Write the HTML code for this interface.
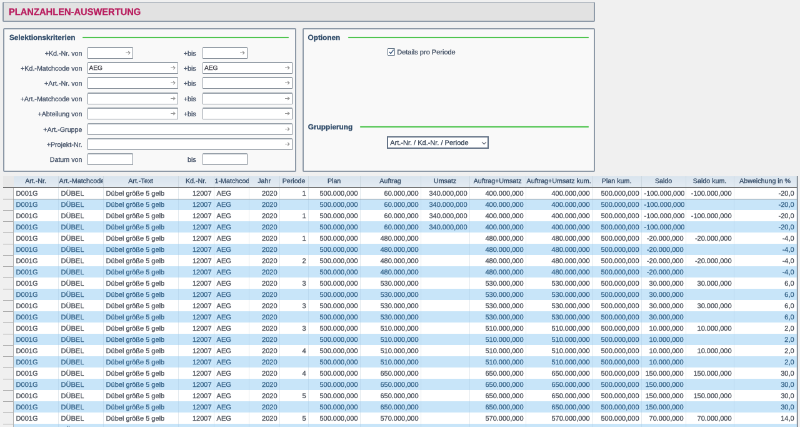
<!DOCTYPE html>
<html><head><meta charset="utf-8">
<style>
html,body{margin:0;padding:0;width:800px;height:427px;overflow:hidden;background:#f0f0f0;}
#wrap{text-rendering:geometricPrecision;-webkit-font-smoothing:antialiased;will-change:transform;-webkit-text-stroke:0.3px currentColor;position:absolute;left:0;top:0;width:1280px;height:684px;transform:scale(0.625);transform-origin:0 0;font-family:"Liberation Sans",sans-serif;}
.title{position:absolute;left:4px;top:3.3px;width:948px;height:31.6px;background:#e2e2e2;border:1.6px solid #8e9aa8;border-left-width:2.4px;border-right-width:2.4px;border-bottom-width:2.6px;border-radius:2px;box-sizing:border-box;}
.title span{position:absolute;left:7.6px;top:5.8px;font-size:15.3px;line-height:20px;font-weight:bold;color:#b91d5e;transform:scaleX(0.96);transform-origin:0 0;white-space:nowrap;}
.panel{position:absolute;top:45.4px;height:229.6px;background:#f9f9f9;border:2px solid #8d99a7;border-radius:2px;box-sizing:border-box;}
.ph{position:absolute;font-size:11.8px;font-weight:bold;color:#2e4a68;}
.gl{position:absolute;height:2.4px;background:#4fc44f;border-radius:1px;box-shadow:0 0 1.2px #a0e4a0;}
.lab{position:absolute;right:calc(1280px - 131.4px);font-size:10.7px;color:#435066;height:19px;line-height:22px;white-space:nowrap;}
.bis{position:absolute;right:calc(1280px - 313.6px);font-size:10.7px;color:#435066;height:19px;line-height:22px;}
.inp{position:absolute;height:19px;background:#fff;border:1.6px solid #848d97;border-top:2.6px solid #98a1aa;border-radius:1.6px;box-sizing:border-box;}
.inp .v{position:absolute;left:2px;top:0;font-size:10.2px;line-height:17px;color:#3c3c44;}
.arr{position:absolute;right:3px;top:4px;}
.tbl{position:absolute;left:4.8px;top:282px;width:1271.2px;height:402px;overflow:hidden;}
.rscol{position:absolute;left:0;top:0;width:16.8px;height:402px;background:#f0f0f0;border-right:1.5px solid #b0b0b0;box-sizing:border-box;}
.hdr{position:absolute;left:0;top:0;width:100%;height:17px;background:linear-gradient(#d9e4ee,#e4ecf3);}
.hsel{position:absolute;left:0;top:0;width:16.8px;height:17px;background:#e8e8e8;}
.hline{position:absolute;left:0;top:17px;width:100%;height:1.5px;background:#7a7a7a;}
.row{position:absolute;left:16.8px;right:0;height:18px;}
.row.w{background:#fff;}
.row.b{background:#c8e5f9;}
.c{position:absolute;top:0;height:18px;line-height:20px;font-size:11px;white-space:nowrap;overflow:hidden;box-sizing:border-box;padding:0 4px;border-right:1px solid #e4eaee;}
.row .c{margin-left:-16.8px;}
.c.l{text-align:left;}
.c.r{text-align:right;padding-right:3px;}
.row.w .c{color:#4a505a;}
.row.b .c{color:#38658a;border-right-color:#bcdaf0;}
.rs{position:absolute;left:0;width:16px;height:18.7px;border-bottom:1.4px solid #a4a4a4;box-sizing:border-box;}
.hdr .c{text-align:center;color:#344b66;border-right:1.2px solid #cdd8e1;line-height:17px;height:17px;padding:0 1px;font-size:10.7px;}
.focus{position:absolute;left:0;top:17px;width:100%;height:20px;border-top:1.6px solid #747474;border-bottom:1.3px solid #8a8a8a;border-right:1.3px solid #8a8a8a;box-sizing:border-box;}
</style></head><body><div id="wrap">
<div class="title"><span>PLANZAHLEN-AUSWERTUNG</span></div>
<div class="panel" style="left:5.3px;width:468.4px;"></div>
<div class="panel" style="left:483.8px;width:468.6px;"></div>
<div class="ph" style="left:14.9px;top:52.6px;">Selektionskriterien</div>
<div class="gl" style="left:132px;top:58.8px;width:330px;"></div>
<div class="ph" style="left:492.5px;top:52.6px;">Optionen</div>
<div class="gl" style="left:556.6px;top:58.8px;width:385px;"></div>
<div class="ph" style="left:492.8px;top:196.2px;">Gruppierung</div>
<div class="gl" style="left:576px;top:201.5px;width:365.6px;"></div>
<div class="lab" style="top:74.5px">+Kd.-Nr. von</div><div class="inp" style="left:139.5px;top:74.5px;width:73px"><span class="v"></span><svg class="arr" width="9" height="7" viewBox="0 0 9 7"><path d="M1 3.5 H8 M5.2 1 L8 3.5 L5.2 6" stroke="#959595" stroke-width="1.1" fill="none"/></svg></div><div class="bis" style="top:74.5px">+bis</div><div class="inp" style="left:324px;top:74.5px;width:72px"><span class="v"></span><svg class="arr" width="9" height="7" viewBox="0 0 9 7"><path d="M1 3.5 H8 M5.2 1 L8 3.5 L5.2 6" stroke="#959595" stroke-width="1.1" fill="none"/></svg></div><div class="lab" style="top:98.9px">+Kd.-Matchcode von</div><div class="inp" style="left:139.5px;top:98.9px;width:145px"><span class="v">AEG</span><svg class="arr" width="9" height="7" viewBox="0 0 9 7"><path d="M1 3.5 H8 M5.2 1 L8 3.5 L5.2 6" stroke="#959595" stroke-width="1.1" fill="none"/></svg></div><div class="bis" style="top:98.9px">+bis</div><div class="inp" style="left:324px;top:98.9px;width:144px"><span class="v">AEG</span><svg class="arr" width="9" height="7" viewBox="0 0 9 7"><path d="M1 3.5 H8 M5.2 1 L8 3.5 L5.2 6" stroke="#959595" stroke-width="1.1" fill="none"/></svg></div><div class="lab" style="top:123.3px">+Art.-Nr. von</div><div class="inp" style="left:139.5px;top:123.3px;width:145px"><span class="v"></span><svg class="arr" width="9" height="7" viewBox="0 0 9 7"><path d="M1 3.5 H8 M5.2 1 L8 3.5 L5.2 6" stroke="#959595" stroke-width="1.1" fill="none"/></svg></div><div class="bis" style="top:123.3px">+bis</div><div class="inp" style="left:324px;top:123.3px;width:144px"><span class="v"></span><svg class="arr" width="9" height="7" viewBox="0 0 9 7"><path d="M1 3.5 H8 M5.2 1 L8 3.5 L5.2 6" stroke="#959595" stroke-width="1.1" fill="none"/></svg></div><div class="lab" style="top:147.7px">+Art.-Matchcode von</div><div class="inp" style="left:139.5px;top:147.7px;width:145px"><span class="v"></span><svg class="arr" width="9" height="7" viewBox="0 0 9 7"><path d="M1 3.5 H8 M5.2 1 L8 3.5 L5.2 6" stroke="#959595" stroke-width="1.1" fill="none"/></svg></div><div class="bis" style="top:147.7px">+bis</div><div class="inp" style="left:324px;top:147.7px;width:144px"><span class="v"></span><svg class="arr" width="9" height="7" viewBox="0 0 9 7"><path d="M1 3.5 H8 M5.2 1 L8 3.5 L5.2 6" stroke="#959595" stroke-width="1.1" fill="none"/></svg></div><div class="lab" style="top:172.1px">+Abteilung von</div><div class="inp" style="left:139.5px;top:172.1px;width:145px"><span class="v"></span><svg class="arr" width="9" height="7" viewBox="0 0 9 7"><path d="M1 3.5 H8 M5.2 1 L8 3.5 L5.2 6" stroke="#959595" stroke-width="1.1" fill="none"/></svg></div><div class="bis" style="top:172.1px">+bis</div><div class="inp" style="left:324px;top:172.1px;width:144px"><span class="v"></span><svg class="arr" width="9" height="7" viewBox="0 0 9 7"><path d="M1 3.5 H8 M5.2 1 L8 3.5 L5.2 6" stroke="#959595" stroke-width="1.1" fill="none"/></svg></div><div class="lab" style="top:196.5px">+Art.-Gruppe</div><div class="inp" style="left:139.5px;top:196.5px;width:328.5px"><span class="v"></span><svg class="arr" width="9" height="7" viewBox="0 0 9 7"><path d="M1 3.5 H8 M5.2 1 L8 3.5 L5.2 6" stroke="#959595" stroke-width="1.1" fill="none"/></svg></div><div class="lab" style="top:220.9px">+Projekt-Nr.</div><div class="inp" style="left:139.5px;top:220.9px;width:328.5px"><span class="v"></span><svg class="arr" width="9" height="7" viewBox="0 0 9 7"><path d="M1 3.5 H8 M5.2 1 L8 3.5 L5.2 6" stroke="#959595" stroke-width="1.1" fill="none"/></svg></div><div class="lab" style="top:245.3px">Datum von</div><div class="inp" style="left:139.5px;top:245.3px;width:73px"><span class="v"></span></div><div class="bis" style="top:245.3px">bis</div><div class="inp" style="left:324px;top:245.3px;width:72px"><span class="v"></span></div>
<div class="cb" style="position:absolute;left:619.6px;top:76.8px;width:10px;height:10px;border:1.5px solid #5d6f82;background:#fff;border-radius:1px;"><svg width="10" height="10" viewBox="0 0 10 10" style="position:absolute;left:0;top:0"><path d="M1.8 5 L4.2 7.6 L8.6 1.6" stroke="#2e4f78" stroke-width="1.4" fill="none"/></svg></div>
<div style="position:absolute;left:635.2px;top:74.8px;font-size:11px;line-height:19px;color:#3c4a5e;">Details pro Periode</div>
<div style="position:absolute;left:619.2px;top:218px;width:159px;height:16px;border:2px solid #637286;background:#fff;">
<span style="position:absolute;left:3px;top:0;font-size:11px;line-height:18px;color:#394658;">Art.-Nr. / Kd.-Nr. / Periode</span>
<svg width="9" height="6" viewBox="0 0 9 6" style="position:absolute;right:1.5px;top:5.5px"><path d="M1 1.2 L4.5 4.7 L8 1.2" stroke="#5a6070" stroke-width="1.1" fill="none"/></svg>
</div>
<div class="tbl">
<div class="rscol"></div>
<div class="hdr"><div class="c l" style="left:16.8px;width:72px">Art.-Nr.</div><div class="c l" style="left:88.8px;width:72px">Art.-Matchcode</div><div class="c l" style="left:160.8px;width:120px">Art.-Text</div><div class="c r" style="left:280.8px;width:57px">Kd.-Nr.</div><div class="c l" style="left:337.8px;width:56px">1-Matchcode</div><div class="c r" style="left:393.8px;width:49px">Jahr</div><div class="c r" style="left:442.8px;width:46px">Periode</div><div class="c r" style="left:488.8px;width:83px">Plan</div><div class="c r" style="left:571.8px;width:97px">Auftrag</div><div class="c r" style="left:668.8px;width:78px">Umsatz</div><div class="c r" style="left:746.8px;width:90px">Auftrag+Umsatz</div><div class="c r" style="left:836.8px;width:106px">Auftrag+Umsatz kum.</div><div class="c r" style="left:942.8px;width:79px">Plan kum.</div><div class="c r" style="left:1021.8px;width:71px">Saldo</div><div class="c r" style="left:1092.8px;width:77px">Saldo kum.</div><div class="c r" style="left:1169.8px;width:100px">Abweichung in %</div><div class="hsel"></div></div>
<div class="row w" style="top:18px"><div class="c l" style="left:16.8px;width:72px">D001G</div><div class="c l" style="left:88.8px;width:72px">DÜBEL</div><div class="c l" style="left:160.8px;width:120px">Dübel größe 5 gelb</div><div class="c r" style="left:280.8px;width:57px">12007</div><div class="c l" style="left:337.8px;width:56px">AEG</div><div class="c r" style="left:393.8px;width:49px">2020</div><div class="c r" style="left:442.8px;width:46px">1</div><div class="c r" style="left:488.8px;width:83px">500.000,000</div><div class="c r" style="left:571.8px;width:97px">60.000,000</div><div class="c r" style="left:668.8px;width:78px">340.000,000</div><div class="c r" style="left:746.8px;width:90px">400.000,000</div><div class="c r" style="left:836.8px;width:106px">400.000,000</div><div class="c r" style="left:942.8px;width:79px">500.000,000</div><div class="c r" style="left:1021.8px;width:71px">-100.000,000</div><div class="c r" style="left:1092.8px;width:77px">-100.000,000</div><div class="c r" style="left:1169.8px;width:100px">-20,0</div></div><div class="rs" style="top:18px"></div><div class="row b" style="top:36px"><div class="c l" style="left:16.8px;width:72px">D001G</div><div class="c l" style="left:88.8px;width:72px">DÜBEL</div><div class="c l" style="left:160.8px;width:120px">Dübel größe 5 gelb</div><div class="c r" style="left:280.8px;width:57px">12007</div><div class="c l" style="left:337.8px;width:56px">AEG</div><div class="c r" style="left:393.8px;width:49px">2020</div><div class="c r" style="left:442.8px;width:46px"></div><div class="c r" style="left:488.8px;width:83px">500.000,000</div><div class="c r" style="left:571.8px;width:97px">60.000,000</div><div class="c r" style="left:668.8px;width:78px">340.000,000</div><div class="c r" style="left:746.8px;width:90px">400.000,000</div><div class="c r" style="left:836.8px;width:106px">400.000,000</div><div class="c r" style="left:942.8px;width:79px">500.000,000</div><div class="c r" style="left:1021.8px;width:71px">-100.000,000</div><div class="c r" style="left:1092.8px;width:77px"></div><div class="c r" style="left:1169.8px;width:100px">-20,0</div></div><div class="rs" style="top:36px"></div><div class="row w" style="top:54px"><div class="c l" style="left:16.8px;width:72px">D001G</div><div class="c l" style="left:88.8px;width:72px">DÜBEL</div><div class="c l" style="left:160.8px;width:120px">Dübel größe 5 gelb</div><div class="c r" style="left:280.8px;width:57px">12007</div><div class="c l" style="left:337.8px;width:56px">AEG</div><div class="c r" style="left:393.8px;width:49px">2020</div><div class="c r" style="left:442.8px;width:46px">1</div><div class="c r" style="left:488.8px;width:83px">500.000,000</div><div class="c r" style="left:571.8px;width:97px">60.000,000</div><div class="c r" style="left:668.8px;width:78px">340.000,000</div><div class="c r" style="left:746.8px;width:90px">400.000,000</div><div class="c r" style="left:836.8px;width:106px">400.000,000</div><div class="c r" style="left:942.8px;width:79px">500.000,000</div><div class="c r" style="left:1021.8px;width:71px">-100.000,000</div><div class="c r" style="left:1092.8px;width:77px">-100.000,000</div><div class="c r" style="left:1169.8px;width:100px">-20,0</div></div><div class="rs" style="top:54px"></div><div class="row b" style="top:72px"><div class="c l" style="left:16.8px;width:72px">D001G</div><div class="c l" style="left:88.8px;width:72px">DÜBEL</div><div class="c l" style="left:160.8px;width:120px">Dübel größe 5 gelb</div><div class="c r" style="left:280.8px;width:57px">12007</div><div class="c l" style="left:337.8px;width:56px">AEG</div><div class="c r" style="left:393.8px;width:49px">2020</div><div class="c r" style="left:442.8px;width:46px"></div><div class="c r" style="left:488.8px;width:83px">500.000,000</div><div class="c r" style="left:571.8px;width:97px">60.000,000</div><div class="c r" style="left:668.8px;width:78px">340.000,000</div><div class="c r" style="left:746.8px;width:90px">400.000,000</div><div class="c r" style="left:836.8px;width:106px">400.000,000</div><div class="c r" style="left:942.8px;width:79px">500.000,000</div><div class="c r" style="left:1021.8px;width:71px">-100.000,000</div><div class="c r" style="left:1092.8px;width:77px"></div><div class="c r" style="left:1169.8px;width:100px">-20,0</div></div><div class="rs" style="top:72px"></div><div class="row w" style="top:90px"><div class="c l" style="left:16.8px;width:72px">D001G</div><div class="c l" style="left:88.8px;width:72px">DÜBEL</div><div class="c l" style="left:160.8px;width:120px">Dübel größe 5 gelb</div><div class="c r" style="left:280.8px;width:57px">12007</div><div class="c l" style="left:337.8px;width:56px">AEG</div><div class="c r" style="left:393.8px;width:49px">2020</div><div class="c r" style="left:442.8px;width:46px">1</div><div class="c r" style="left:488.8px;width:83px">500.000,000</div><div class="c r" style="left:571.8px;width:97px">480.000,000</div><div class="c r" style="left:668.8px;width:78px"></div><div class="c r" style="left:746.8px;width:90px">480.000,000</div><div class="c r" style="left:836.8px;width:106px">480.000,000</div><div class="c r" style="left:942.8px;width:79px">500.000,000</div><div class="c r" style="left:1021.8px;width:71px">-20.000,000</div><div class="c r" style="left:1092.8px;width:77px">-20.000,000</div><div class="c r" style="left:1169.8px;width:100px">-4,0</div></div><div class="rs" style="top:90px"></div><div class="row b" style="top:108px"><div class="c l" style="left:16.8px;width:72px">D001G</div><div class="c l" style="left:88.8px;width:72px">DÜBEL</div><div class="c l" style="left:160.8px;width:120px">Dübel größe 5 gelb</div><div class="c r" style="left:280.8px;width:57px">12007</div><div class="c l" style="left:337.8px;width:56px">AEG</div><div class="c r" style="left:393.8px;width:49px">2020</div><div class="c r" style="left:442.8px;width:46px"></div><div class="c r" style="left:488.8px;width:83px">500.000,000</div><div class="c r" style="left:571.8px;width:97px">480.000,000</div><div class="c r" style="left:668.8px;width:78px"></div><div class="c r" style="left:746.8px;width:90px">480.000,000</div><div class="c r" style="left:836.8px;width:106px">480.000,000</div><div class="c r" style="left:942.8px;width:79px">500.000,000</div><div class="c r" style="left:1021.8px;width:71px">-20.000,000</div><div class="c r" style="left:1092.8px;width:77px"></div><div class="c r" style="left:1169.8px;width:100px">-4,0</div></div><div class="rs" style="top:108px"></div><div class="row w" style="top:126px"><div class="c l" style="left:16.8px;width:72px">D001G</div><div class="c l" style="left:88.8px;width:72px">DÜBEL</div><div class="c l" style="left:160.8px;width:120px">Dübel größe 5 gelb</div><div class="c r" style="left:280.8px;width:57px">12007</div><div class="c l" style="left:337.8px;width:56px">AEG</div><div class="c r" style="left:393.8px;width:49px">2020</div><div class="c r" style="left:442.8px;width:46px">2</div><div class="c r" style="left:488.8px;width:83px">500.000,000</div><div class="c r" style="left:571.8px;width:97px">480.000,000</div><div class="c r" style="left:668.8px;width:78px"></div><div class="c r" style="left:746.8px;width:90px">480.000,000</div><div class="c r" style="left:836.8px;width:106px">480.000,000</div><div class="c r" style="left:942.8px;width:79px">500.000,000</div><div class="c r" style="left:1021.8px;width:71px">-20.000,000</div><div class="c r" style="left:1092.8px;width:77px">-20.000,000</div><div class="c r" style="left:1169.8px;width:100px">-4,0</div></div><div class="rs" style="top:126px"></div><div class="row b" style="top:144px"><div class="c l" style="left:16.8px;width:72px">D001G</div><div class="c l" style="left:88.8px;width:72px">DÜBEL</div><div class="c l" style="left:160.8px;width:120px">Dübel größe 5 gelb</div><div class="c r" style="left:280.8px;width:57px">12007</div><div class="c l" style="left:337.8px;width:56px">AEG</div><div class="c r" style="left:393.8px;width:49px">2020</div><div class="c r" style="left:442.8px;width:46px"></div><div class="c r" style="left:488.8px;width:83px">500.000,000</div><div class="c r" style="left:571.8px;width:97px">480.000,000</div><div class="c r" style="left:668.8px;width:78px"></div><div class="c r" style="left:746.8px;width:90px">480.000,000</div><div class="c r" style="left:836.8px;width:106px">480.000,000</div><div class="c r" style="left:942.8px;width:79px">500.000,000</div><div class="c r" style="left:1021.8px;width:71px">-20.000,000</div><div class="c r" style="left:1092.8px;width:77px"></div><div class="c r" style="left:1169.8px;width:100px">-4,0</div></div><div class="rs" style="top:144px"></div><div class="row w" style="top:162px"><div class="c l" style="left:16.8px;width:72px">D001G</div><div class="c l" style="left:88.8px;width:72px">DÜBEL</div><div class="c l" style="left:160.8px;width:120px">Dübel größe 5 gelb</div><div class="c r" style="left:280.8px;width:57px">12007</div><div class="c l" style="left:337.8px;width:56px">AEG</div><div class="c r" style="left:393.8px;width:49px">2020</div><div class="c r" style="left:442.8px;width:46px">3</div><div class="c r" style="left:488.8px;width:83px">500.000,000</div><div class="c r" style="left:571.8px;width:97px">530.000,000</div><div class="c r" style="left:668.8px;width:78px"></div><div class="c r" style="left:746.8px;width:90px">530.000,000</div><div class="c r" style="left:836.8px;width:106px">530.000,000</div><div class="c r" style="left:942.8px;width:79px">500.000,000</div><div class="c r" style="left:1021.8px;width:71px">30.000,000</div><div class="c r" style="left:1092.8px;width:77px">30.000,000</div><div class="c r" style="left:1169.8px;width:100px">6,0</div></div><div class="rs" style="top:162px"></div><div class="row b" style="top:180px"><div class="c l" style="left:16.8px;width:72px">D001G</div><div class="c l" style="left:88.8px;width:72px">DÜBEL</div><div class="c l" style="left:160.8px;width:120px">Dübel größe 5 gelb</div><div class="c r" style="left:280.8px;width:57px">12007</div><div class="c l" style="left:337.8px;width:56px">AEG</div><div class="c r" style="left:393.8px;width:49px">2020</div><div class="c r" style="left:442.8px;width:46px"></div><div class="c r" style="left:488.8px;width:83px">500.000,000</div><div class="c r" style="left:571.8px;width:97px">530.000,000</div><div class="c r" style="left:668.8px;width:78px"></div><div class="c r" style="left:746.8px;width:90px">530.000,000</div><div class="c r" style="left:836.8px;width:106px">530.000,000</div><div class="c r" style="left:942.8px;width:79px">500.000,000</div><div class="c r" style="left:1021.8px;width:71px">30.000,000</div><div class="c r" style="left:1092.8px;width:77px"></div><div class="c r" style="left:1169.8px;width:100px">6,0</div></div><div class="rs" style="top:180px"></div><div class="row w" style="top:198px"><div class="c l" style="left:16.8px;width:72px">D001G</div><div class="c l" style="left:88.8px;width:72px">DÜBEL</div><div class="c l" style="left:160.8px;width:120px">Dübel größe 5 gelb</div><div class="c r" style="left:280.8px;width:57px">12007</div><div class="c l" style="left:337.8px;width:56px">AEG</div><div class="c r" style="left:393.8px;width:49px">2020</div><div class="c r" style="left:442.8px;width:46px">3</div><div class="c r" style="left:488.8px;width:83px">500.000,000</div><div class="c r" style="left:571.8px;width:97px">530.000,000</div><div class="c r" style="left:668.8px;width:78px"></div><div class="c r" style="left:746.8px;width:90px">530.000,000</div><div class="c r" style="left:836.8px;width:106px">530.000,000</div><div class="c r" style="left:942.8px;width:79px">500.000,000</div><div class="c r" style="left:1021.8px;width:71px">30.000,000</div><div class="c r" style="left:1092.8px;width:77px">30.000,000</div><div class="c r" style="left:1169.8px;width:100px">6,0</div></div><div class="rs" style="top:198px"></div><div class="row b" style="top:216px"><div class="c l" style="left:16.8px;width:72px">D001G</div><div class="c l" style="left:88.8px;width:72px">DÜBEL</div><div class="c l" style="left:160.8px;width:120px">Dübel größe 5 gelb</div><div class="c r" style="left:280.8px;width:57px">12007</div><div class="c l" style="left:337.8px;width:56px">AEG</div><div class="c r" style="left:393.8px;width:49px">2020</div><div class="c r" style="left:442.8px;width:46px"></div><div class="c r" style="left:488.8px;width:83px">500.000,000</div><div class="c r" style="left:571.8px;width:97px">530.000,000</div><div class="c r" style="left:668.8px;width:78px"></div><div class="c r" style="left:746.8px;width:90px">530.000,000</div><div class="c r" style="left:836.8px;width:106px">530.000,000</div><div class="c r" style="left:942.8px;width:79px">500.000,000</div><div class="c r" style="left:1021.8px;width:71px">30.000,000</div><div class="c r" style="left:1092.8px;width:77px"></div><div class="c r" style="left:1169.8px;width:100px">6,0</div></div><div class="rs" style="top:216px"></div><div class="row w" style="top:234px"><div class="c l" style="left:16.8px;width:72px">D001G</div><div class="c l" style="left:88.8px;width:72px">DÜBEL</div><div class="c l" style="left:160.8px;width:120px">Dübel größe 5 gelb</div><div class="c r" style="left:280.8px;width:57px">12007</div><div class="c l" style="left:337.8px;width:56px">AEG</div><div class="c r" style="left:393.8px;width:49px">2020</div><div class="c r" style="left:442.8px;width:46px">3</div><div class="c r" style="left:488.8px;width:83px">500.000,000</div><div class="c r" style="left:571.8px;width:97px">510.000,000</div><div class="c r" style="left:668.8px;width:78px"></div><div class="c r" style="left:746.8px;width:90px">510.000,000</div><div class="c r" style="left:836.8px;width:106px">510.000,000</div><div class="c r" style="left:942.8px;width:79px">500.000,000</div><div class="c r" style="left:1021.8px;width:71px">10.000,000</div><div class="c r" style="left:1092.8px;width:77px">10.000,000</div><div class="c r" style="left:1169.8px;width:100px">2,0</div></div><div class="rs" style="top:234px"></div><div class="row b" style="top:252px"><div class="c l" style="left:16.8px;width:72px">D001G</div><div class="c l" style="left:88.8px;width:72px">DÜBEL</div><div class="c l" style="left:160.8px;width:120px">Dübel größe 5 gelb</div><div class="c r" style="left:280.8px;width:57px">12007</div><div class="c l" style="left:337.8px;width:56px">AEG</div><div class="c r" style="left:393.8px;width:49px">2020</div><div class="c r" style="left:442.8px;width:46px"></div><div class="c r" style="left:488.8px;width:83px">500.000,000</div><div class="c r" style="left:571.8px;width:97px">510.000,000</div><div class="c r" style="left:668.8px;width:78px"></div><div class="c r" style="left:746.8px;width:90px">510.000,000</div><div class="c r" style="left:836.8px;width:106px">510.000,000</div><div class="c r" style="left:942.8px;width:79px">500.000,000</div><div class="c r" style="left:1021.8px;width:71px">10.000,000</div><div class="c r" style="left:1092.8px;width:77px"></div><div class="c r" style="left:1169.8px;width:100px">2,0</div></div><div class="rs" style="top:252px"></div><div class="row w" style="top:270px"><div class="c l" style="left:16.8px;width:72px">D001G</div><div class="c l" style="left:88.8px;width:72px">DÜBEL</div><div class="c l" style="left:160.8px;width:120px">Dübel größe 5 gelb</div><div class="c r" style="left:280.8px;width:57px">12007</div><div class="c l" style="left:337.8px;width:56px">AEG</div><div class="c r" style="left:393.8px;width:49px">2020</div><div class="c r" style="left:442.8px;width:46px">4</div><div class="c r" style="left:488.8px;width:83px">500.000,000</div><div class="c r" style="left:571.8px;width:97px">510.000,000</div><div class="c r" style="left:668.8px;width:78px"></div><div class="c r" style="left:746.8px;width:90px">510.000,000</div><div class="c r" style="left:836.8px;width:106px">510.000,000</div><div class="c r" style="left:942.8px;width:79px">500.000,000</div><div class="c r" style="left:1021.8px;width:71px">10.000,000</div><div class="c r" style="left:1092.8px;width:77px">10.000,000</div><div class="c r" style="left:1169.8px;width:100px">2,0</div></div><div class="rs" style="top:270px"></div><div class="row b" style="top:288px"><div class="c l" style="left:16.8px;width:72px">D001G</div><div class="c l" style="left:88.8px;width:72px">DÜBEL</div><div class="c l" style="left:160.8px;width:120px">Dübel größe 5 gelb</div><div class="c r" style="left:280.8px;width:57px">12007</div><div class="c l" style="left:337.8px;width:56px">AEG</div><div class="c r" style="left:393.8px;width:49px">2020</div><div class="c r" style="left:442.8px;width:46px"></div><div class="c r" style="left:488.8px;width:83px">500.000,000</div><div class="c r" style="left:571.8px;width:97px">510.000,000</div><div class="c r" style="left:668.8px;width:78px"></div><div class="c r" style="left:746.8px;width:90px">510.000,000</div><div class="c r" style="left:836.8px;width:106px">510.000,000</div><div class="c r" style="left:942.8px;width:79px">500.000,000</div><div class="c r" style="left:1021.8px;width:71px">10.000,000</div><div class="c r" style="left:1092.8px;width:77px"></div><div class="c r" style="left:1169.8px;width:100px">2,0</div></div><div class="rs" style="top:288px"></div><div class="row w" style="top:306px"><div class="c l" style="left:16.8px;width:72px">D001G</div><div class="c l" style="left:88.8px;width:72px">DÜBEL</div><div class="c l" style="left:160.8px;width:120px">Dübel größe 5 gelb</div><div class="c r" style="left:280.8px;width:57px">12007</div><div class="c l" style="left:337.8px;width:56px">AEG</div><div class="c r" style="left:393.8px;width:49px">2020</div><div class="c r" style="left:442.8px;width:46px">4</div><div class="c r" style="left:488.8px;width:83px">500.000,000</div><div class="c r" style="left:571.8px;width:97px">650.000,000</div><div class="c r" style="left:668.8px;width:78px"></div><div class="c r" style="left:746.8px;width:90px">650.000,000</div><div class="c r" style="left:836.8px;width:106px">650.000,000</div><div class="c r" style="left:942.8px;width:79px">500.000,000</div><div class="c r" style="left:1021.8px;width:71px">150.000,000</div><div class="c r" style="left:1092.8px;width:77px">150.000,000</div><div class="c r" style="left:1169.8px;width:100px">30,0</div></div><div class="rs" style="top:306px"></div><div class="row b" style="top:324px"><div class="c l" style="left:16.8px;width:72px">D001G</div><div class="c l" style="left:88.8px;width:72px">DÜBEL</div><div class="c l" style="left:160.8px;width:120px">Dübel größe 5 gelb</div><div class="c r" style="left:280.8px;width:57px">12007</div><div class="c l" style="left:337.8px;width:56px">AEG</div><div class="c r" style="left:393.8px;width:49px">2020</div><div class="c r" style="left:442.8px;width:46px"></div><div class="c r" style="left:488.8px;width:83px">500.000,000</div><div class="c r" style="left:571.8px;width:97px">650.000,000</div><div class="c r" style="left:668.8px;width:78px"></div><div class="c r" style="left:746.8px;width:90px">650.000,000</div><div class="c r" style="left:836.8px;width:106px">650.000,000</div><div class="c r" style="left:942.8px;width:79px">500.000,000</div><div class="c r" style="left:1021.8px;width:71px">150.000,000</div><div class="c r" style="left:1092.8px;width:77px"></div><div class="c r" style="left:1169.8px;width:100px">30,0</div></div><div class="rs" style="top:324px"></div><div class="row w" style="top:342px"><div class="c l" style="left:16.8px;width:72px">D001G</div><div class="c l" style="left:88.8px;width:72px">DÜBEL</div><div class="c l" style="left:160.8px;width:120px">Dübel größe 5 gelb</div><div class="c r" style="left:280.8px;width:57px">12007</div><div class="c l" style="left:337.8px;width:56px">AEG</div><div class="c r" style="left:393.8px;width:49px">2020</div><div class="c r" style="left:442.8px;width:46px">5</div><div class="c r" style="left:488.8px;width:83px">500.000,000</div><div class="c r" style="left:571.8px;width:97px">650.000,000</div><div class="c r" style="left:668.8px;width:78px"></div><div class="c r" style="left:746.8px;width:90px">650.000,000</div><div class="c r" style="left:836.8px;width:106px">650.000,000</div><div class="c r" style="left:942.8px;width:79px">500.000,000</div><div class="c r" style="left:1021.8px;width:71px">150.000,000</div><div class="c r" style="left:1092.8px;width:77px">150.000,000</div><div class="c r" style="left:1169.8px;width:100px">30,0</div></div><div class="rs" style="top:342px"></div><div class="row b" style="top:360px"><div class="c l" style="left:16.8px;width:72px">D001G</div><div class="c l" style="left:88.8px;width:72px">DÜBEL</div><div class="c l" style="left:160.8px;width:120px">Dübel größe 5 gelb</div><div class="c r" style="left:280.8px;width:57px">12007</div><div class="c l" style="left:337.8px;width:56px">AEG</div><div class="c r" style="left:393.8px;width:49px">2020</div><div class="c r" style="left:442.8px;width:46px"></div><div class="c r" style="left:488.8px;width:83px">500.000,000</div><div class="c r" style="left:571.8px;width:97px">650.000,000</div><div class="c r" style="left:668.8px;width:78px"></div><div class="c r" style="left:746.8px;width:90px">650.000,000</div><div class="c r" style="left:836.8px;width:106px">650.000,000</div><div class="c r" style="left:942.8px;width:79px">500.000,000</div><div class="c r" style="left:1021.8px;width:71px">150.000,000</div><div class="c r" style="left:1092.8px;width:77px"></div><div class="c r" style="left:1169.8px;width:100px">30,0</div></div><div class="rs" style="top:360px"></div><div class="row w" style="top:378px"><div class="c l" style="left:16.8px;width:72px">D001G</div><div class="c l" style="left:88.8px;width:72px">DÜBEL</div><div class="c l" style="left:160.8px;width:120px">Dübel größe 5 gelb</div><div class="c r" style="left:280.8px;width:57px">12007</div><div class="c l" style="left:337.8px;width:56px">AEG</div><div class="c r" style="left:393.8px;width:49px">2020</div><div class="c r" style="left:442.8px;width:46px">5</div><div class="c r" style="left:488.8px;width:83px">500.000,000</div><div class="c r" style="left:571.8px;width:97px">570.000,000</div><div class="c r" style="left:668.8px;width:78px"></div><div class="c r" style="left:746.8px;width:90px">570.000,000</div><div class="c r" style="left:836.8px;width:106px">570.000,000</div><div class="c r" style="left:942.8px;width:79px">500.000,000</div><div class="c r" style="left:1021.8px;width:71px">70.000,000</div><div class="c r" style="left:1092.8px;width:77px">70.000,000</div><div class="c r" style="left:1169.8px;width:100px">14,0</div></div><div class="rs" style="top:378px"></div><div class="row b" style="top:396px"><div class="c l" style="left:16.8px;width:72px">D001G</div><div class="c l" style="left:88.8px;width:72px">DÜBEL</div><div class="c l" style="left:160.8px;width:120px">Dübel größe 5 gelb</div><div class="c r" style="left:280.8px;width:57px">12007</div><div class="c l" style="left:337.8px;width:56px">AEG</div><div class="c r" style="left:393.8px;width:49px">2020</div><div class="c r" style="left:442.8px;width:46px"></div><div class="c r" style="left:488.8px;width:83px">500.000,000</div><div class="c r" style="left:571.8px;width:97px">570.000,000</div><div class="c r" style="left:668.8px;width:78px"></div><div class="c r" style="left:746.8px;width:90px">570.000,000</div><div class="c r" style="left:836.8px;width:106px">570.000,000</div><div class="c r" style="left:942.8px;width:79px">500.000,000</div><div class="c r" style="left:1021.8px;width:71px">70.000,000</div><div class="c r" style="left:1092.8px;width:77px"></div><div class="c r" style="left:1169.8px;width:100px">14,0</div></div><div class="rs" style="top:396px"></div>
<div class="hline"></div>
<div class="focus"></div>
<div style="position:absolute;right:0;top:0;width:1.4px;height:402px;background:#8e959d;"></div>
</div>
</div></body></html>
